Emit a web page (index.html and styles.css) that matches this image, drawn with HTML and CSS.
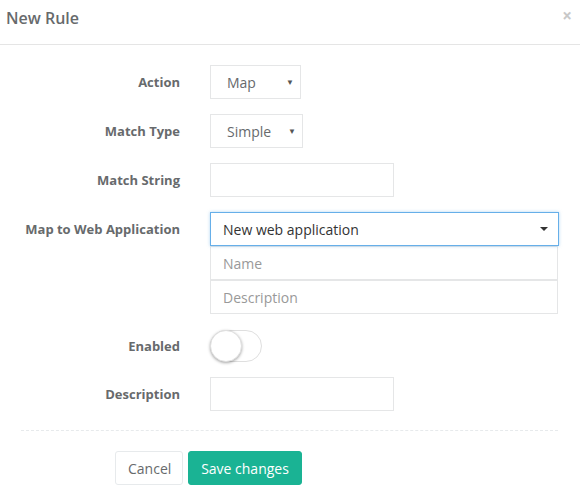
FILE: index.html
```html
<!DOCTYPE html>
<html>
<head>
<meta charset="utf-8">
<link rel="stylesheet" href="styles.css">
</head>
<body>
<div class="modal">
  <div class="modal-header">
    <h4 class="title">New Rule</h4>
    <span class="close">×</span>
  </div>
  <div class="modal-body">
    <div class="row">
      <label class="lbl">Action</label>
      <div class="ctl"><div class="select sel-action"><span>Map</span><span class="tri">▼</span></div></div>
    </div>
    <div class="row">
      <label class="lbl">Match Type</label>
      <div class="ctl"><div class="select sel-type"><span>Simple</span><span class="tri">▼</span></div></div>
    </div>
    <div class="row">
      <label class="lbl">Match String</label>
      <div class="ctl"><div class="input short"></div></div>
    </div>
    <div class="row">
      <label class="lbl">Map to Web Application</label>
      <div class="ctl wide">
        <div class="select-big"><span>New web application</span><span class="caret"></span></div>
        <div class="input full ph">Name</div>
        <div class="input full ph">Description</div>
      </div>
    </div>
    <div class="row toggle-row">
      <label class="lbl">Enabled</label>
      <div class="ctl"><div class="switch"><div class="knob"></div></div></div>
    </div>
    <div class="row">
      <label class="lbl">Description</label>
      <div class="ctl"><div class="input short"></div></div>
    </div>
    <div class="divider"></div>
    <div class="footer">
      <button class="btn btn-white">Cancel</button>
      <button class="btn btn-primary">Save changes</button>
    </div>
  </div>
</div>
</body>
</html>
```
FILE: styles.css
```css
html, body {
  margin: 0;
  padding: 0;
  background: #fff;
  font-family: "Open Sans", "Liberation Sans", sans-serif;
  color: #676a6c;
}
.modal {
  width: 580px;
}
.modal-header {
  height: 45px;
  border-bottom: 1px solid #e5e5e5;
  display: flex;
  align-items: center;
  justify-content: space-between;
  padding: 0 8px 0 6px;
  box-sizing: border-box;
}
.title {
  margin: 0;
  font-size: 16px;
  font-weight: 600;
  color: #676a6c;
  line-height: 20px;
  position: relative;
  top: -4px;
}
.close {
  font-size: 17px;
  font-weight: bold;
  color: #c8c8c8;
  line-height: 20px;
  position: relative;
  top: -6px;
}
.modal-body {
  padding: 20px 0 0 0;
}
.row {
  display: flex;
  align-items: flex-start;
  margin-bottom: 15px;
}
.lbl {
  width: 180px;
  text-align: right;
  font-size: 13px;
  font-weight: 700;
  color: #676a6c;
  line-height: 34px;
  margin-right: 30px;
  flex-shrink: 0;
}
.ctl {
  display: flex;
  flex-direction: column;
}
.select {
  height: 34px;
  box-sizing: border-box;
  border: 1px solid #e5e6e7;
  display: flex;
  align-items: center;
  justify-content: space-between;
  padding: 0 6px 0 16px;
  font-size: 14px;
  color: #676a6c;
}
.sel-action { width: 91px; }
.sel-type { width: 93px; padding-left: 16px; }
.tri {
  font-size: 8px;
  color: #555;
  position: relative;
  top: -1px;
}
.input {
  height: 34px;
  box-sizing: border-box;
  border: 1px solid #e5e6e7;
  background: #fff;
}
.input.short { width: 184px; }
.input.full {
  width: 348px;
}
.ph {
  font-size: 14px;
  color: #999;
  line-height: 34px;
  padding-left: 12px;
}
.select-big {
  width: 349px;
  height: 34px;
  box-sizing: border-box;
  border: 1px solid #66afe9;
  box-shadow: 0 0 3px rgba(102, 175, 233, 0.5);
  display: flex;
  align-items: center;
  justify-content: space-between;
  padding: 0 10px 0 12px;
  font-size: 14px;
  color: #333;
  position: relative;
  z-index: 1;
}
.caret {
  width: 0;
  height: 0;
  border-left: 4px solid transparent;
  border-right: 4px solid transparent;
  border-top: 4px solid #333;
}
.toggle-row {
  padding-top: 1px;
}
.toggle-row .lbl { line-height: 32px; }
.switch {
  width: 52px;
  height: 32px;
  box-sizing: border-box;
  border: 1px solid #dfdfdf;
  border-radius: 16px;
  background: #fff;
  position: relative;
}
.knob {
  position: absolute;
  left: -1px;
  top: -1px;
  width: 30px;
  height: 30px;
  border-radius: 50%;
  background: #fff;
  border: 1px solid #e0e0e0;
  box-shadow: 0 1px 3px rgba(0, 0, 0, 0.35);
}
.divider {
  margin: 19px 22px 20px 21px;
  border-top: 1px dashed #e7eaec;
}
.footer {
  display: flex;
  gap: 5px;
  padding-left: 115px;
}
.btn {
  font-family: "Open Sans", "Liberation Sans", sans-serif;
  font-size: 14px;
  height: 34px;
  border-radius: 3px;
  padding: 0 12px;
  cursor: pointer;
}
.btn-white {
  background: #fff;
  border: 1px solid #e7eaec;
  color: #676a6c;
  width: 68px;
}
.btn-primary {
  background: #1ab394;
  border: 1px solid #1ab394;
  color: #fff;
  width: 114px;
}
```
